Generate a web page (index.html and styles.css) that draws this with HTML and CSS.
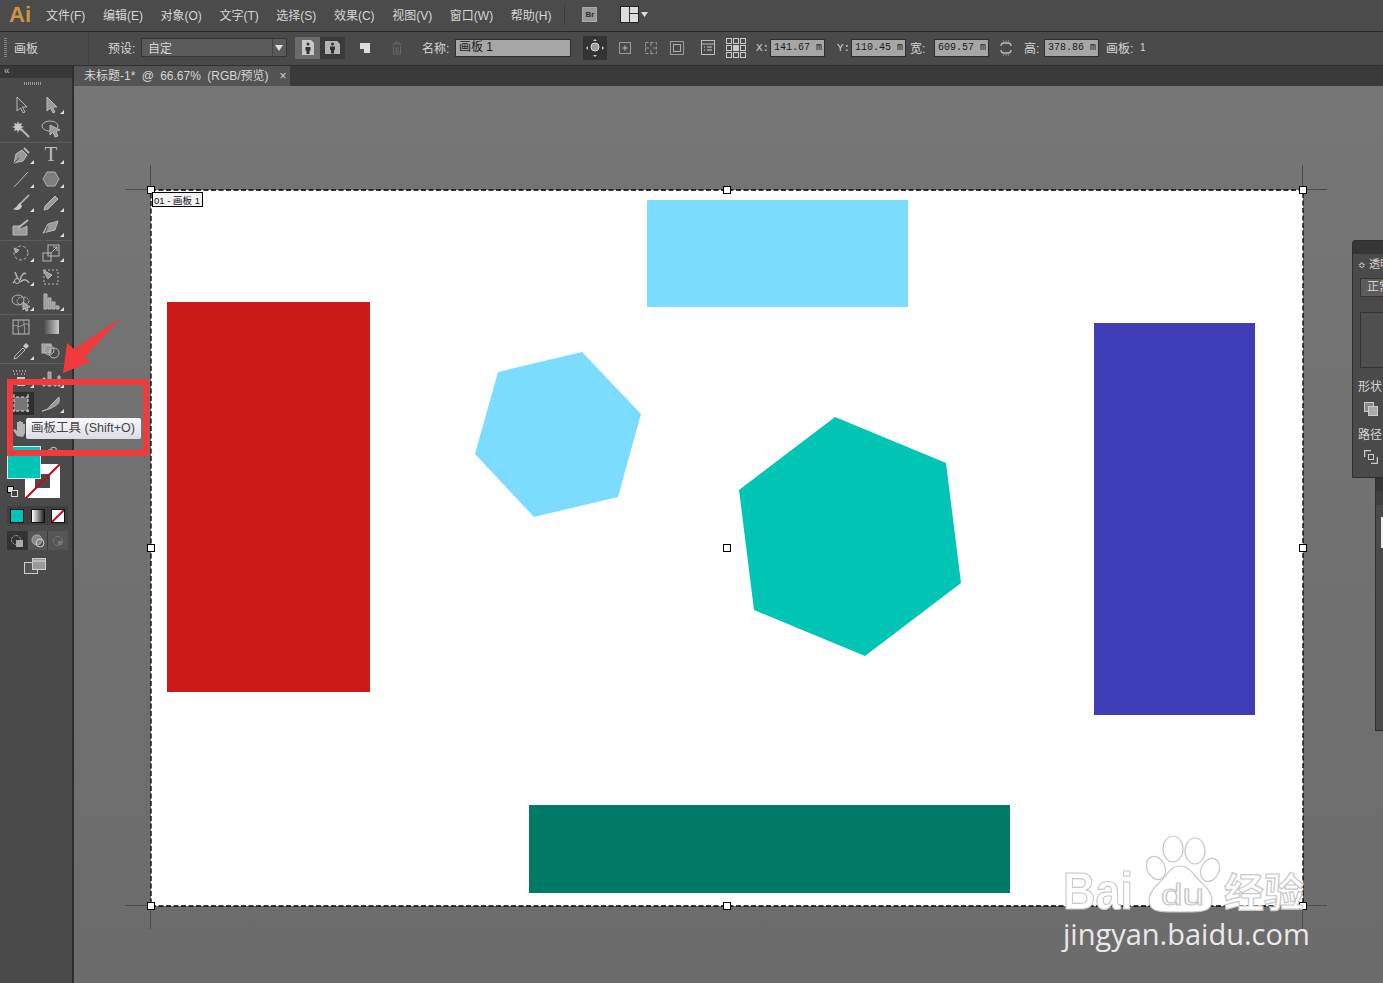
FILE: index.html
```html
<!DOCTYPE html>
<html lang="en">
<head>
  <meta charset="UTF-8">
  <title>Adobe Illustrator - 画板工具</title>
  <link rel="stylesheet" href="styles.css">
</head>
<body>
<div class="app">

  <!-- Menu bar -->
  <header class="menubar">
    <span class="logo">Ai</span>
    <nav class="menu">
      <span>文件(F)</span><span>编辑(E)</span><span>对象(O)</span><span>文字(T)</span><span>选择(S)</span><span>效果(C)</span><span>视图(V)</span><span>窗口(W)</span><span>帮助(H)</span>
    </nav>
    <i class="menu-sep"></i>
    <span class="br-btn">Br</span>
    <svg class="layout-btn" width="30" height="17" viewBox="0 0 30 17"><rect x=".5" y=".5" width="18" height="16" fill="#ddd" stroke="#222"/><path d="M9.500 1v15M9.500 7.500h9" stroke="#333" fill="none"/><path d="M21 6h7l-3.500 5z" fill="#ddd"/></svg>
  </header>

  <!-- Control bar -->
  <section class="controlbar">
    <i class="grip"></i>
    <span class="ctl-title">画板</span>
    <i class="ctl-sep"></i>
    <span class="lbl preset-lbl">预设:</span>
    <div class="select"><span>自定</span><b class="select-arrow"></b></div>
    <div class="orient">
      <span class="orient-btn on"><svg width="14" height="17" viewBox="0 0 14 17"><path d="M1 1h9l3 3v12H1z" fill="#c8c8c8"/><circle cx="7" cy="5" r="1.500" fill="#333"/><path d="M4.500 8h5v3.500H8.500V15h-3v-3.500h-1z" fill="#333"/></svg></span>
      <span class="orient-btn"><svg width="17" height="15" viewBox="0 0 17 15"><path d="M1 1h12l3 3v10H1z" fill="#b4b4b4"/><circle cx="8.500" cy="4" r="1.500" fill="#333"/><path d="M6 6.500h5V10h-1v3.500H7V10H6z" fill="#333"/></svg></span>
    </div>
    <svg class="new-board" width="12" height="12" viewBox="0 0 12 12"><path d="M1 1h10v10H5V7H1z" fill="#ddd"/></svg>
    <svg class="trash" width="12" height="14" viewBox="0 0 12 14"><path d="M1 3h10M4 3V1h4v2M2.500 5v8h7V5" stroke="#666" fill="none"/><path d="M5 6v6M7 6v6" stroke="#666"/></svg>
    <span class="lbl name-lbl">名称:</span>
    <div class="field name-field">画板 1</div>
    <span class="move-btn"><svg width="18" height="18" viewBox="0 0 18 18"><circle cx="9" cy="8" r="4" fill="#999" stroke="#ddd"/><path d="M9 0l2 2H7zM9 18l-2-2h4zM0 9l2-2v4zM18 9l-2 2V7z" fill="#ccc"/></svg></span>
    <div class="board-icons">
      <svg width="16" height="16" viewBox="0 0 16 16"><rect x="2.500" y="2.500" width="11" height="11" fill="none" stroke="#999"/><path d="M8 5.500v5M5.500 8h5" stroke="#bbb"/></svg>
      <svg width="16" height="16" viewBox="0 0 16 16"><rect x="2.500" y="2.500" width="11" height="11" fill="none" stroke="#999" stroke-dasharray="3 2"/><path d="M8 2v4M8 10v4M2 8h4M10 8h4" stroke="#999"/></svg>
      <svg width="16" height="16" viewBox="0 0 16 16"><rect x="1.500" y="1.500" width="13" height="13" fill="none" stroke="#999"/><rect x="4.500" y="4.500" width="7" height="7" fill="none" stroke="#aaa"/></svg>
    </div>
    <svg class="options-icon" width="14" height="15" viewBox="0 0 14 15"><rect x=".5" y=".5" width="13" height="14" fill="none" stroke="#bbb"/><path d="M1 4h12" stroke="#bbb"/><path d="M3 7h1M6 7h5M3 10h1M6 10h5" stroke="#ccc"/></svg>
    <svg class="ref-point" width="20" height="20" viewBox="0 0 20 20"><g fill="none" stroke="#ccc"><rect x=".5" y=".5" width="5" height="5"/><rect x="7.500" y=".5" width="5" height="5"/><rect x="14.500" y=".5" width="5" height="5"/><rect x=".5" y="7.500" width="5" height="5"/><rect x="14.500" y="7.500" width="5" height="5"/><rect x=".5" y="14.500" width="5" height="5"/><rect x="7.500" y="14.500" width="5" height="5"/><rect x="14.500" y="14.500" width="5" height="5"/></g><rect x="7" y="7" width="6" height="6" fill="#ccc"/></svg>
    <span class="lbl x-lbl">X:</span>
    <div class="field num">141.67 m</div>
    <span class="lbl y-lbl">Y:</span>
    <div class="field num">110.45 m</div>
    <span class="lbl w-lbl">宽:</span>
    <div class="field num">609.57 m</div>
    <svg class="link-icon" width="14" height="16" viewBox="0 0 14 16"><path d="M2 6a3 3 0 0 1 3-3h4a3 3 0 0 1 3 3M2 10a3 3 0 0 0 3 3h4a3 3 0 0 0 3-3" fill="none" stroke="#bbb" stroke-width="1.300"/><path d="M7 0v2M7 14v2M4 0l1 2M10 0L9 2M4 16l1-2M10 16l-1-2" stroke="#888"/></svg>
    <span class="lbl h-lbl">高:</span>
    <div class="field num">378.86 m</div>
    <span class="lbl board-lbl">画板:</span>
    <span class="lbl board-num">1</span>
  </section>

  <div class="workspace">

    <!-- Tool panel -->
    <aside class="tools">
      <div class="tools-head">&#171;</div>
      <div class="tools-grip"></div>

      <div class="tool-group first">
        <span class="tool"><svg viewBox="0 0 20 20"><path d="M6 2v14l3.500-3 2.500 5 2-1-2.500-5H16z"/></svg></span>
        <span class="tool more"><svg viewBox="0 0 20 20"><path class="solid" d="M6 2v14l3.500-3 2.500 5 2-1-2.500-5H16z"/></svg></span>
        <span class="tool"><svg viewBox="0 0 20 20"><path class="bright" d="M7 2l1 3 3-1-1 3 3 1-3 1 1 3-3-1-1 3-1-3-3 1 1-3-3-1 3-1-1-3 3 1z"/><path d="M9 9l9 9" stroke-width="2"/></svg></span>
        <span class="tool"><svg viewBox="0 0 20 20"><ellipse cx="9" cy="7" rx="8" ry="5"/><path class="solid" d="M9 6l10 5-4 1 2 5-3 1-2-5-3 3z"/></svg></span>
      </div>

      <div class="tool-group">
        <span class="tool more"><svg viewBox="0 0 20 20"><path class="solid" d="M3 18l2-9 6-4 5 5-4 6z"/><path d="M13 3l5 5" stroke-width="2"/><path d="M3 18l5-5" stroke="#444"/></svg></span>
        <span class="tool more tool-type">T</span>
        <span class="tool more"><svg viewBox="0 0 20 20"><path d="M3 18L17 3"/></svg></span>
        <span class="tool more"><svg viewBox="0 0 20 20"><path class="hex" d="M6 3h8l4 7-4 7H6l-4-7z"/></svg></span>
        <span class="tool more"><svg viewBox="0 0 20 20"><path d="M9 11l9-9" stroke-width="1.600"/><path class="bright" d="M9 10c-2 0-2 4-7 6 4 2 8 1 9-3z"/></svg></span>
        <span class="tool more"><svg viewBox="0 0 20 20"><path class="solid" d="M4 13L14 3l3 3L7 16l-4 1z"/></svg></span>
        <span class="tool"><svg viewBox="0 0 20 20"><path class="solid" d="M2 8h8l-3 4 5-2 4-2v9H2z"/><path d="M7 10l10-8" stroke-width="2"/></svg></span>
        <span class="tool more"><svg viewBox="0 0 20 20"><path class="solid" d="M7 6l10-3-3 9-12 3z"/><path d="M7 8l-3 7" stroke="#555"/></svg></span>
      </div>

      <div class="tool-group">
        <span class="tool more"><svg viewBox="0 0 20 20"><circle cx="10" cy="10" r="7" stroke-dasharray="3 2"/><path class="solid" d="M3 5l2 5 3-3z"/></svg></span>
        <span class="tool more"><svg viewBox="0 0 20 20"><rect x="2" y="10" width="8" height="8"/><rect x="7" y="2" width="11" height="11"/><path d="M10 10l6-6M12 4h4v4"/></svg></span>
        <span class="tool more"><svg viewBox="0 0 20 20"><circle cx="6" cy="14" r="2.500"/><path d="M4 5l3 7M9 13c2-6 4-8 6-6M9 15c4-3 7-3 9 1M2 16l2-2" stroke-width="1.500"/></svg></span>
        <span class="tool"><svg viewBox="0 0 20 20"><rect x="3" y="3" width="14" height="14" stroke-dasharray="2 2"/><path class="solid" d="M2 3l9 5-4 4z"/></svg></span>
        <span class="tool more"><svg viewBox="0 0 20 20"><ellipse cx="7" cy="8" rx="6" ry="5"/><ellipse cx="12" cy="9" rx="6" ry="4" stroke-dasharray="2 1"/><path class="solid" d="M12 10l7 5-3 .5 1 3-2 .5-1-3-2 2z"/></svg></span>
        <span class="tool more"><svg viewBox="0 0 20 20"><path class="solid" d="M3 2h3v15H3zM7 6h3v11H7zM11 10h3v7h-3zM15 14h3v3h-3z"/></svg></span>
      </div>

      <div class="tool-group">
        <span class="tool"><svg viewBox="0 0 20 20"><rect x="2" y="3" width="16" height="14"/><path d="M2 9c4-2 4 2 8 0s4-3 8-1M7 3c1 4-1 7 1 14M13 3c-1 5 2 8 0 14" stroke-width=".8"/></svg></span>
        <span class="tool"><svg viewBox="0 0 20 20"><defs><linearGradient id="gr"><stop offset="0" stop-color="#444"/><stop offset="1" stop-color="#ccc"/></linearGradient></defs><rect x="2" y="3" width="16" height="14" fill="url(#gr)" stroke="none"/></svg></span>
        <span class="tool more"><svg viewBox="0 0 20 20"><path d="M3 18l1-3 8-8 2 2-8 8z"/><path class="bright" d="M12 5l3-3 3 3-3 3z"/></svg></span>
        <span class="tool"><svg viewBox="0 0 20 20"><rect class="solid" x="1" y="3" width="9" height="9"/><circle cx="8" cy="9" r="5"/><circle cx="13" cy="12" r="5"/></svg></span>
      </div>

      <div class="tool-group last">
        <span class="tool more"><svg viewBox="0 0 20 20"><path d="M2 3h1M5 3h1M8 3h1M11 3h1M14 3h1M3 6h1M6 6h1M10 6h1M13 6h1" stroke-width="1.500"/><rect class="bright" x="6" y="9" width="8" height="9"/></svg></span>
        <span class="tool more"><svg viewBox="0 0 20 20"><path class="solid" d="M2 10h2v8H2zM7 4h3v14H7zM13 12h2v6h-2zM17 8h2v10h-2z"/></svg></span>
      </div>
      <div class="tool-group tight">
        <span class="tool tool-board"><svg viewBox="0 0 20 20"><rect class="board-fill" x="3" y="3" width="14" height="14"/><path d="M0 3h20M0 17h20M3 0v20M17 0v20" stroke-dasharray="3 2" stroke="#ddd"/></svg></span>
        <span class="tool more"><svg viewBox="0 0 20 20"><path class="solid" d="M1 17c5-1 7-3 9-6l8-8c1 4 0 7-4 9-3 2-8 4-13 5z"/></svg></span>
        <span class="tool"><svg viewBox="0 0 20 20"><path class="hand" d="M6 18l-4-6 2-1 2 2V4h2v5-6h2v6-5h2v6-4h2v9l-2 4z"/></svg></span>
        <span class="tool"></span>
      </div>

      <div class="color-well">
        <span class="swap">&#8630;</span>
        <span class="stroke-swatch"><i></i><svg viewBox="0 0 34 34"><path d="M0 34L34 0" stroke="#b3121f" stroke-width="2"/></svg></span>
        <span class="fill-swatch"></span>
        <span class="default-swatch"><i></i><b></b></span>
      </div>

      <div class="mode-row">
        <span><i class="mode-color"></i></span>
        <span><i class="mode-grad"></i></span>
        <span><i class="mode-none"><svg viewBox="0 0 12 12"><path d="M0 12L12 0" stroke="#c5101e" stroke-width="2"/></svg></i></span>
      </div>

      <div class="mode-row draw-row">
        <span class="active"><svg width="14" height="14" viewBox="0 0 14 14"><circle cx="6" cy="6" r="4.500" fill="none" stroke="#aaa" stroke-dasharray="2 1"/><rect x="6" y="6" width="7" height="7" fill="#aaa"/></svg></span>
        <span><svg width="14" height="14" viewBox="0 0 14 14"><circle cx="6" cy="6" r="5" fill="#888" stroke="#aaa"/><circle cx="9" cy="9" r="4" fill="none" stroke="#ccc"/></svg></span>
        <span><svg width="14" height="14" viewBox="0 0 14 14"><circle cx="7" cy="7" r="4.500" fill="none" stroke="#777" stroke-dasharray="5 1"/><rect x="7" y="7" width="4" height="4" fill="#777"/></svg></span>
      </div>

      <svg class="screen-mode" width="22" height="16" viewBox="0 0 22 16"><rect x=".5" y="4.500" width="13" height="11" fill="#555" stroke="#ccc"/><rect x="8.500" y=".5" width="13" height="11" fill="#999" stroke="#ccc"/><path d="M9 3h12" stroke="#ddd"/></svg>
    </aside>

    <div class="doc">
      <div class="tabbar">
        <div class="tab"><span class="tab-name">未标题-1* @ 66.67% (RGB/预览)</span><span class="tab-x">×</span></div>
      </div>

      <!-- Canvas: coordinates in the viewBox are page pixels -->
      <main class="canvas">
        <svg class="art" viewBox="74 86 1309 897" width="1309" height="897">
          <rect x="151" y="190" width="1152" height="716" fill="#fff"/>
          <rect x="647" y="200" width="261" height="107" fill="#7bdcff"/>
          <rect x="167" y="302" width="203" height="390" fill="#cd1a18"/>
          <rect x="1094" y="323" width="161" height="392" fill="#3f3db5"/>
          <rect x="529" y="805" width="481" height="88" fill="#007a66"/>
          <polygon points="582,352 641,414 618,497 534,517 475,454 498,372" fill="#7bdcff"/>
          <polygon points="835,417 946,463 961,583 865,656 754,610 739,490" fill="#00c4b4"/>

          <g stroke="#4c4c4c" stroke-width="1">
            <path d="M150.500 165v24M125 189.500h25M1302.500 165v24M1304 189.500h23M150.500 907v22M125 905.500h25M1302.500 907v22M1304 905.500h23"/>
          </g>
          <rect x="151" y="190" width="1152" height="716" fill="none" stroke="#000" stroke-width="1.300" stroke-dasharray="5 2.500"/>

          <g fill="#fff" stroke="#000">
            <rect x="147.500" y="186.500" width="7" height="7"/><rect x="723.500" y="186.500" width="7" height="7"/><rect x="1299.500" y="186.500" width="7" height="7"/>
            <rect x="147.500" y="544.500" width="7" height="7"/><rect x="723.500" y="544.500" width="7" height="7"/><rect x="1299.500" y="544.500" width="7" height="7"/>
            <rect x="147.500" y="902.500" width="7" height="7"/><rect x="723.500" y="902.500" width="7" height="7"/><rect x="1299.500" y="902.500" width="7" height="7"/>
          </g>

          <rect x="152.500" y="192.500" width="50" height="14" fill="#f2f2f2" stroke="#000"/>
          <text class="board-tag" x="154" y="204">01 - 画板 1</text>

          <!-- watermark -->
          <g class="wm">
            <ellipse cx="1173" cy="849" rx="10" ry="13"/>
            <ellipse cx="1195" cy="851" rx="10" ry="13" />
            <ellipse cx="1156" cy="868" rx="9" ry="12" transform="rotate(-25 1156 868)"/>
            <ellipse cx="1210" cy="870" rx="9" ry="12" transform="rotate(25 1210 870)"/>
            <path d="M1180 866c10 0 14 10 22 17 10 9 12 18 8 24-4 5-12 5-30 5s-25 0-29-5c-4-6-2-15 8-24 8-7 11-17 21-17z"/>
            <text class="wm-latin" x="1063" y="909" textLength="70" lengthAdjust="spacingAndGlyphs">Bai</text>
            <text class="wm-du" x="1161" y="905" textLength="43" lengthAdjust="spacingAndGlyphs">du</text>
            <text class="wm-cjk" x="1224" y="907">经验</text>
          </g>
          <text class="wm-url" x="1063" y="945">jingyan.baidu.com</text>
        </svg>

        <!-- Floating panels -->
        <div class="float-panel">
          <div class="fp-title"></div>
          <div class="fp-tab"><span class="fp-arrows">≎</span> 透明度</div>
          <div class="fp-select">正常</div>
          <div class="fp-preview"></div>
          <div class="fp-label">形状</div>
          <svg class="fp-icon" width="14" height="14" viewBox="0 0 14 14"><rect x=".5" y=".5" width="9" height="9" fill="#888" stroke="#ccc"/><rect x="4.500" y="4.500" width="9" height="9" fill="#aaa" stroke="#ccc"/></svg>
          <div class="fp-label">路径</div>
          <svg class="fp-icon" width="14" height="14" viewBox="0 0 14 14"><path d="M.5 7V.5H7M13.500 7v6.500H7" fill="none" stroke="#ccc" stroke-width="1.500"/><rect x="4.500" y="4.500" width="5" height="5" fill="none" stroke="#ccc"/></svg>
        </div>
        <div class="float-panel-2">
          <div class="fp2-title"></div>
          <div class="fp2-tab"></div>
          <i class="fp2-white"></i>
        </div>
      </main>
    </div>
  </div>

  <!-- Red annotation and tooltip drawn over the tool panel -->
  <div class="tooltip">画板工具 (Shift+O)</div>
  <svg class="markup" viewBox="0 0 1383 983" width="1383" height="983">
    <rect x="10" y="382" width="136" height="71" fill="none" stroke="#f03a3c" stroke-width="6"/>
    <polygon points="121,318 85,357 90,362 63,373 67,343 74,349" fill="#f03a3c"/>
  </svg>
</div>
</body>
</html>
```

FILE: styles.css
```css
/* General */
* {
  box-sizing: border-box;
}

html, body {
  margin: 0;
  padding: 0;
}

body {
  font-family: "Liberation Sans", "Noto Sans CJK SC", sans-serif;
  font-size: 12px;
  color: #d6d6d6;
  background: #4a4a4a;
}

.app {
  position: relative;
  width: 1383px;
  height: 983px;
  overflow: hidden;
  display: flex;
  flex-direction: column;
}

/* Menu bar */
.menubar {
  height: 31px;
  background: #4b4b4b;
  display: flex;
  align-items: center;
  flex: none;
  padding-bottom: 2px;
}

.logo {
  width: 46px;
  padding-left: 9px;
  font-size: 22px;
  font-weight: bold;
  color: #cf9340;
}

.menu {
  display: flex;
  gap: 17.600px;
}

.menu-sep {
  width: 1px;
  height: 20px;
  background: #3a3a3a;
  margin-left: 13px;
}

.br-btn {
  width: 15px;
  height: 15px;
  margin-left: 17px;
  background: #999;
  border: 1px solid #aaa;
  color: #2c2c2c;
  font-size: 8px;
  font-weight: bold;
  line-height: 13px;
  text-align: center;
}

.layout-btn {
  margin-left: 23px;
}

/* Control bar */
.controlbar {
  height: 35px;
  background: #4a4a4a;
  border-top: 1px solid #2b2b2b;
  border-bottom: 1px solid #2f2f2f;
  padding-bottom: 2px;
  display: flex;
  align-items: center;
  flex: none;
}

.grip {
  width: 3px;
  height: 20px;
  margin-left: 4px;
  background: repeating-linear-gradient(#888 0 1px, #444 1px 2px);
}

.ctl-title {
  margin-left: 7px;
  width: 24px;
}

.ctl-sep {
  width: 1px;
  height: 32px;
  margin-left: 50px;
  background: #424242;
}

.lbl {
  white-space: nowrap;
}

.preset-lbl {
  margin-left: 19px;
  width: 33px;
}

.select {
  width: 146px;
  height: 19px;
  background: #5a5a5a;
  border: 1px solid #333;
  display: flex;
  align-items: center;
  justify-content: space-between;
  padding-left: 6px;
}

.select-arrow {
  width: 14px;
  height: 17px;
  border-left: 1px solid #444;
  position: relative;
}

.select-arrow::after {
  content: "";
  position: absolute;
  left: 2px;
  top: 6px;
  border: 4px solid transparent;
  border-top: 6px solid #ddd;
  border-bottom: 0;
}

.orient {
  display: flex;
  margin-left: 8px;
  width: 50px;
  height: 22px;
  background: #3a3a3a;
  border-radius: 1px;
}

.orient-btn {
  width: 25px;
  display: flex;
  align-items: center;
  justify-content: center;
}

.orient-btn.on {
  background: #6b6b6b;
}

.new-board {
  margin-left: 14px;
}

.trash {
  margin-left: 20px;
}

.name-lbl {
  margin-left: 19px;
  width: 33px;
}

.field {
  height: 18px;
  background: #a6a6a6;
  border: 1px solid #2e2e2e;
  color: #1c1c1c;
  line-height: 15px;
  white-space: nowrap;
  overflow: hidden;
}

.name-field {
  width: 116px;
  padding-left: 3px;
}

.num {
  width: 55px;
  padding-left: 3px;
  font-family: "Liberation Mono", monospace;
  font-size: 10px;
}

.move-btn {
  width: 24px;
  height: 24px;
  margin-left: 12px;
  background: #333;
  display: flex;
  align-items: center;
  justify-content: center;
}

.board-icons {
  display: flex;
  gap: 10px;
  margin-left: 10px;
}

.options-icon {
  margin-left: 16px;
}

.ref-point {
  margin-left: 11px;
}

.x-lbl {
  margin-left: 10px;
  width: 14px;
  font-family: "Liberation Mono", monospace;
  font-size: 11px;
}

.y-lbl {
  margin-left: 12px;
  width: 14px;
  font-family: "Liberation Mono", monospace;
  font-size: 11px;
}

.w-lbl {
  margin-left: 4px;
  width: 24px;
}

.link-icon {
  margin-left: 10px;
}

.h-lbl {
  margin-left: 11px;
  width: 20px;
}

.board-lbl {
  margin-left: 7px;
  width: 34px;
}

.board-num {
  font-size: 10px;
}

/* Workspace */
.workspace {
  flex: 1;
  display: flex;
  min-height: 0;
}

.tools {
  width: 74px;
  flex: none;
  background: #4a4a4a;
  border-right: 2px solid #2e2e2e;
  display: flex;
  flex-direction: column;
  align-items: flex-start;
}

.tools-head {
  width: 100%;
  height: 12px;
  background: #383838;
  color: #bbb;
  font-size: 10px;
  line-height: 10px;
  padding-left: 4px;
}

.tools-grip {
  width: 100%;
  height: 15px;
  position: relative;
}

.tools-grip::after {
  content: "";
  position: absolute;
  left: 24px;
  top: 4px;
  width: 18px;
  height: 3px;
  background: repeating-linear-gradient(90deg, #999 0 1px, #444 1px 2px);
}

.tool-group {
  width: 100%;
  padding: 0 6px;
  display: grid;
  grid-template-columns: 30px 30px;
  grid-auto-rows: 24.300px;
  border-top: 1px solid #5c5c5c;
}

.tool-group.first {
  border-top: 0;
}

.tool-group.last {
  grid-auto-rows: 27px;
}

.tool-group.tight {
  border-top: 0;
  grid-auto-rows: 24.500px;
}

.tool {
  position: relative;
  display: flex;
  align-items: center;
  justify-content: center;
}

.tool svg {
  width: 20px;
  height: 20px;
  fill: none;
  stroke: #b8b8b8;
  stroke-width: 1;
}

.tool svg .solid {
  fill: #9a9a9a;
  stroke: #b8b8b8;
}

.tool svg .hex {
  fill: #7d7d7d;
  stroke: #b0b0b0;
}

.tool svg .bright {
  fill: #c8c8c8;
  stroke: none;
}

.tool svg .hand {
  fill: #b4b4b4;
  stroke: none;
}

.tool svg .board-fill {
  fill: #777;
  stroke: none;
}

.tool.more::after {
  content: "";
  position: absolute;
  right: 2px;
  bottom: 3px;
  border-left: 4px solid transparent;
  border-bottom: 4px solid #ddd;
}

.tool-type {
  font-family: "Liberation Serif", serif;
  font-size: 21px;
  color: #bdbdbd;
}

.tool-board {
  background: #2f2f2f;
  margin: 1px 2px;
}

/* Fill and stroke */
.color-well {
  position: relative;
  width: 70px;
  height: 52px;
  margin-top: 6px;
  flex: none;
}

.fill-swatch {
  position: absolute;
  left: 7px;
  top: 0;
  width: 34px;
  height: 33px;
  background: #00c4b4;
  border: 1px solid #e8e8e8;
}

.stroke-swatch {
  position: absolute;
  left: 25px;
  top: 18px;
  width: 35px;
  height: 34px;
  background: #fff;
}

.stroke-swatch i {
  position: absolute;
  left: 10px;
  top: 10px;
  width: 15px;
  height: 14px;
  background: #4a4a4a;
}

.stroke-swatch svg {
  position: absolute;
  inset: 0;
}

.swap {
  position: absolute;
  left: 48px;
  top: -2px;
  font-size: 11px;
  color: #ccc;
}

.default-swatch {
  position: absolute;
  left: 7px;
  top: 40px;
  width: 11px;
  height: 11px;
}

.default-swatch i,
.default-swatch b {
  position: absolute;
  width: 7px;
  height: 7px;
  border: 1px solid #000;
}

.default-swatch i {
  left: 0;
  top: 0;
  background: #ddd;
}

.default-swatch b {
  left: 4px;
  top: 4px;
  background: #444;
  border-color: #ddd;
}

.mode-row {
  display: flex;
  margin: 8px 0 0 7px;
  height: 19px;
  width: 61px;
  background: #3a3a3a;
  gap: 1px;
  flex: none;
}

.mode-row span {
  flex: 1;
  display: flex;
  align-items: center;
  justify-content: center;
  background: #3f3f3f;
}

.mode-row i {
  width: 14px;
  height: 14px;
  border: 1px solid #111;
  display: block;
}

.mode-row i svg {
  display: block;
  width: 100%;
  height: 100%;
}

.mode-color {
  background: #00c4b4;
}

.mode-grad {
  background: linear-gradient(90deg, #fff, #222);
}

.mode-none {
  background: #fff;
}

.draw-row {
  margin-top: 6px;
}

.draw-row span {
  background: #555;
}

.draw-row span.active {
  background: #333;
}

.screen-mode {
  margin: 8px 0 0 24px;
  flex: none;
}

/* Document area */
.doc {
  flex: 1;
  min-width: 0;
  display: flex;
  flex-direction: column;
}

.tabbar {
  height: 20px;
  background: #3a3a3a;
  flex: none;
}

.tab {
  width: 216px;
  height: 20px;
  background: #535353;
  padding-left: 10px;
  line-height: 20px;
  display: flex;
  white-space: nowrap;
}

.tab-name {
  word-spacing: 3px;
}

.tab-x {
  margin-left: 11px;
}

.canvas {
  flex: 1;
  position: relative;
  background: linear-gradient(#767676, #6c6c6c);
  overflow: hidden;
}

.art {
  position: absolute;
  left: 0;
  top: 0;
}

.board-tag {
  font-size: 9.500px;
  fill: #111;
}

/* Watermark */
.wm ellipse,
.wm path,
.wm text {
  fill: #fff;
  stroke: #c8c8c8;
  stroke-width: 1.200;
}

.wm-latin {
  font-size: 52px;
  font-weight: bold;
}

.wm-du {
  font-size: 30px;
}

.wm-cjk {
  font-size: 40px;
  font-weight: bold;
}

.wm-url {
  font-family: "Open Sans", sans-serif;
  font-size: 29px;
  fill: #e9e9e9;
}

/* Floating panels */
.float-panel {
  position: absolute;
  left: 1278px;
  top: 154px;
  width: 40px;
  height: 238px;
  background: #4a4a4a;
  border: 1px solid #2e2e2e;
  border-radius: 3px 0 0 0;
  overflow: hidden;
  white-space: nowrap;
  padding-left: 5px;
}

.fp-title {
  height: 13px;
  margin-left: -5px;
  background: #363636;
}

.fp-tab {
  height: 20px;
  line-height: 20px;
  font-size: 11px;
}

.fp-arrows {
  font-size: 9px;
}

.fp-select {
  width: 40px;
  height: 19px;
  margin: 4px 0 0 2px;
  background: #5c5c5c;
  border: 1px solid #333;
  padding-left: 6px;
  line-height: 17px;
}

.fp-preview {
  width: 40px;
  height: 56px;
  margin: 15px 0 0 2px;
  background: #4f4f4f;
  border: 1px solid #333;
}

.fp-label {
  margin-top: 9px;
}

.fp-icon {
  display: block;
  margin: 8px 0 9px 6px;
}

.float-panel-2 {
  position: absolute;
  left: 1301px;
  top: 392px;
  width: 20px;
  height: 253px;
  background: #4a4a4a;
  border: 1px solid #2e2e2e;
  overflow: hidden;
}

.fp2-title {
  height: 12px;
  background: #363636;
}

.fp2-tab {
  height: 14px;
  background: #3f3f3f;
}

.fp2-white {
  display: block;
  margin: 12px 0 0 5px;
  height: 31px;
  background: #eee;
}

/* Overlays */
.tooltip {
  position: absolute;
  left: 26px;
  top: 418px;
  width: 115px;
  height: 21px;
  background: linear-gradient(#f8f8fc, #dcdce6);
  border-radius: 2px;
  color: #444;
  font-size: 12.500px;
  line-height: 21px;
  padding-left: 5px;
  white-space: nowrap;
}

.markup {
  position: absolute;
  left: 0;
  top: 0;
  pointer-events: none;
}
```
